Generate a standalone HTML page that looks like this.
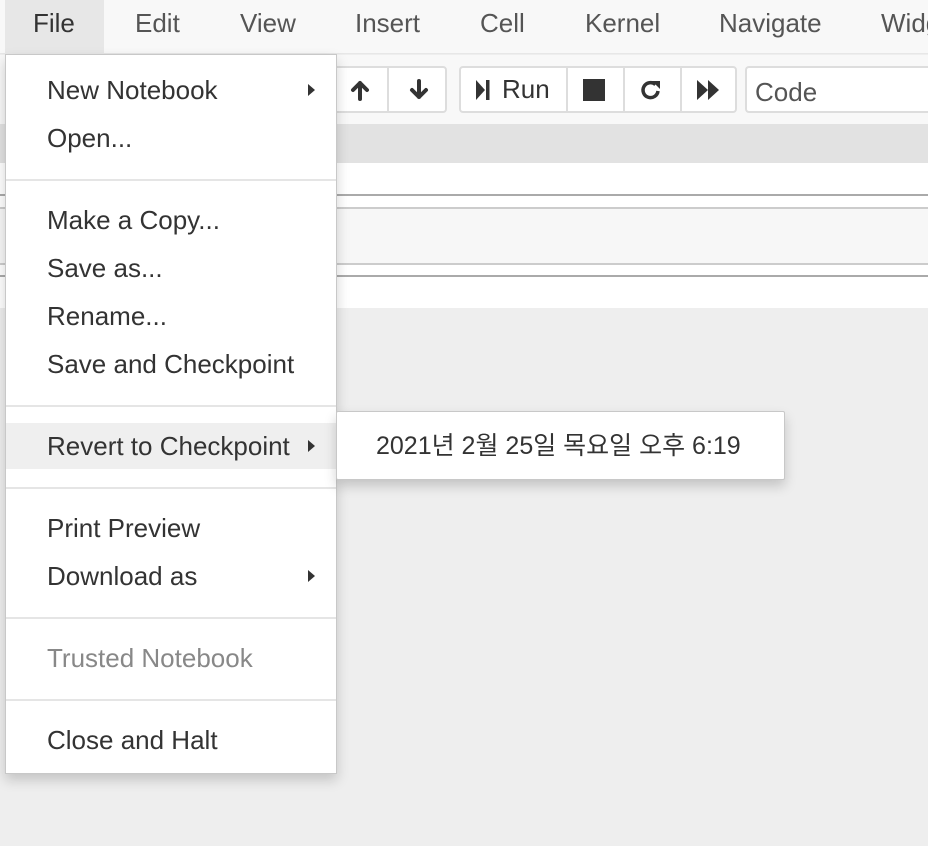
<!DOCTYPE html>
<html><head><meta charset="utf-8"><style>
*{margin:0;padding:0;box-sizing:border-box}
html,body{overflow:hidden}
body{width:928px;height:846px;overflow:hidden;background:#eeeeee;font-family:"Liberation Sans","Noto Sans CJK KR",sans-serif;color:#333;position:relative}
.abs{position:absolute}
.mb{left:0;top:0;width:928px;height:54px;background:#f8f8f8;border-bottom:1px solid #e7e7e7;overflow:hidden}
.mi{position:absolute;top:0;height:54px;line-height:46px;font-size:26px;color:#555;white-space:nowrap}
.tb{left:0;top:55px;width:928px;height:69px;background:#f8f8f8}
.btn{position:absolute;top:66px;height:47px;border:2px solid #ddd;background:#fff;border-radius:4px}
.dv{position:absolute;top:0;bottom:0;width:2px;background:#ddd}
.menu{left:5px;top:54px;width:332px;height:720px;background:#fff;border:1px solid #c8c8c8;box-shadow:0 6px 12px rgba(0,0,0,.18)}
.it{position:absolute;left:41px;font-size:26px;line-height:48px;height:48px;white-space:nowrap}
.sep{position:absolute;left:0;right:0;height:2px;background:#e5e5e5}
.car{position:absolute;right:21px;width:0;height:0;border-top:6px solid transparent;border-bottom:6px solid transparent;border-left:7px solid #333}
</style></head><body>
<div class="abs mb">
 <div class="abs" style="left:5px;top:0;width:99px;height:54px;background:#e7e7e7"></div>
 <div class="mi" style="left:33px;color:#333">File</div>
 <div class="mi" style="left:135px">Edit</div>
 <div class="mi" style="left:240px">View</div>
 <div class="mi" style="left:355px">Insert</div>
 <div class="mi" style="left:480px">Cell</div>
 <div class="mi" style="left:585px">Kernel</div>
 <div class="mi" style="left:719px">Navigate</div>
 <div class="mi" style="left:881px;width:47px;overflow:hidden">Widgets</div>
</div>
<div class="abs tb"></div>
<div class="btn" style="left:300px;width:147px"><div class="dv" style="left:85px"></div>
 <svg class="abs" style="left:47px;top:11px" width="22" height="22" viewBox="0 0 22 22"><path d="M11 20V4M4 11l7-7 7 7" stroke="#333" stroke-width="4" fill="none" stroke-linecap="round" stroke-linejoin="round"/></svg>
 <svg class="abs" style="left:106px;top:11px" width="22" height="22" viewBox="0 0 22 22"><path d="M11 2v16M4 11l7 7 7-7" stroke="#333" stroke-width="4" fill="none" stroke-linecap="round" stroke-linejoin="round"/></svg>
</div>
<div class="btn" style="left:459px;width:278px">
 <div class="dv" style="left:105px"></div><div class="dv" style="left:162px"></div><div class="dv" style="left:219px"></div>
 <svg class="abs" style="left:13px;top:11px" width="18" height="22" viewBox="0 0 18 22"><path d="M2 1l9 10-9 10z" fill="#333"/><rect x="12" y="1" width="3.5" height="20" fill="#333"/></svg>
 <div class="abs" style="left:41px;top:6px;font-size:26px;line-height:30px">Run</div>
 <div class="abs" style="left:122px;top:11px;width:22px;height:22px;background:#333"></div>
 <svg class="abs" style="left:178px;top:10px" width="24" height="24" viewBox="0 0 24 24"><path d="M19 13a7.5 7.5 0 1 1-2.5-6.5" stroke="#333" stroke-width="3.5" fill="none"/><path d="M13 3h8v8z" fill="#333"/></svg>
 <svg class="abs" style="left:235px;top:11px" width="26" height="22" viewBox="0 0 26 22"><path d="M1 1l11 10-11 10zM12 1l11 10-11 10z" fill="#333"/></svg>
</div>
<div class="btn" style="left:745px;width:183px;border-right:none;border-radius:4px 0 0 4px"><div class="abs" style="left:8px;top:9px;font-size:26px;color:#555">Code</div></div>
<div class="abs" style="left:0;top:124px;width:928px;height:39px;background:#e2e2e2"></div>
<div class="abs" style="left:0;top:163px;width:928px;height:145px;background:#fff"></div>
<div class="abs" style="left:0;top:194px;width:928px;height:2px;background:#aaa"></div>
<div class="abs" style="left:0;top:207px;width:928px;height:58px;background:#f7f7f7;border-top:2px solid #ccc;border-bottom:2px solid #ccc"></div>
<div class="abs" style="left:0;top:275px;width:928px;height:2px;background:#aaa"></div>

<div class="abs menu">
 <div class="it" style="top:11px">New Notebook</div><div class="car" style="top:29px"></div>
 <div class="it" style="top:59px">Open...</div>
 <div class="sep" style="top:124px"></div>
 <div class="it" style="top:141px">Make a Copy...</div>
 <div class="it" style="top:189px">Save as...</div>
 <div class="it" style="top:237px">Rename...</div>
 <div class="it" style="top:285px">Save and Checkpoint</div>
 <div class="sep" style="top:350px"></div>
 <div class="abs" style="left:0;right:0;top:368px;height:46px;background:#efefef"></div>
 <div class="it" style="top:367px">Revert to Checkpoint</div><div class="car" style="top:385px"></div>
 <div class="sep" style="top:432px"></div>
 <div class="it" style="top:449px">Print Preview</div>
 <div class="it" style="top:497px">Download as</div><div class="car" style="top:515px"></div>
 <div class="sep" style="top:562px"></div>
 <div class="it" style="top:579px;color:#888">Trusted Notebook</div>
 <div class="sep" style="top:644px"></div>
 <div class="it" style="top:661px">Close and Halt</div>
</div>
<div class="abs" style="left:336px;top:411px;width:449px;height:69px;background:#fff;border:1px solid #c8c8c8;border-radius:2px;box-shadow:0 6px 12px rgba(0,0,0,.18)">
 <div class="abs" style="left:39px;top:10px;font-size:25px;line-height:48px;white-space:nowrap">2021년 2월 25일 목요일 오후 6:19</div>
</div>
</body></html>
